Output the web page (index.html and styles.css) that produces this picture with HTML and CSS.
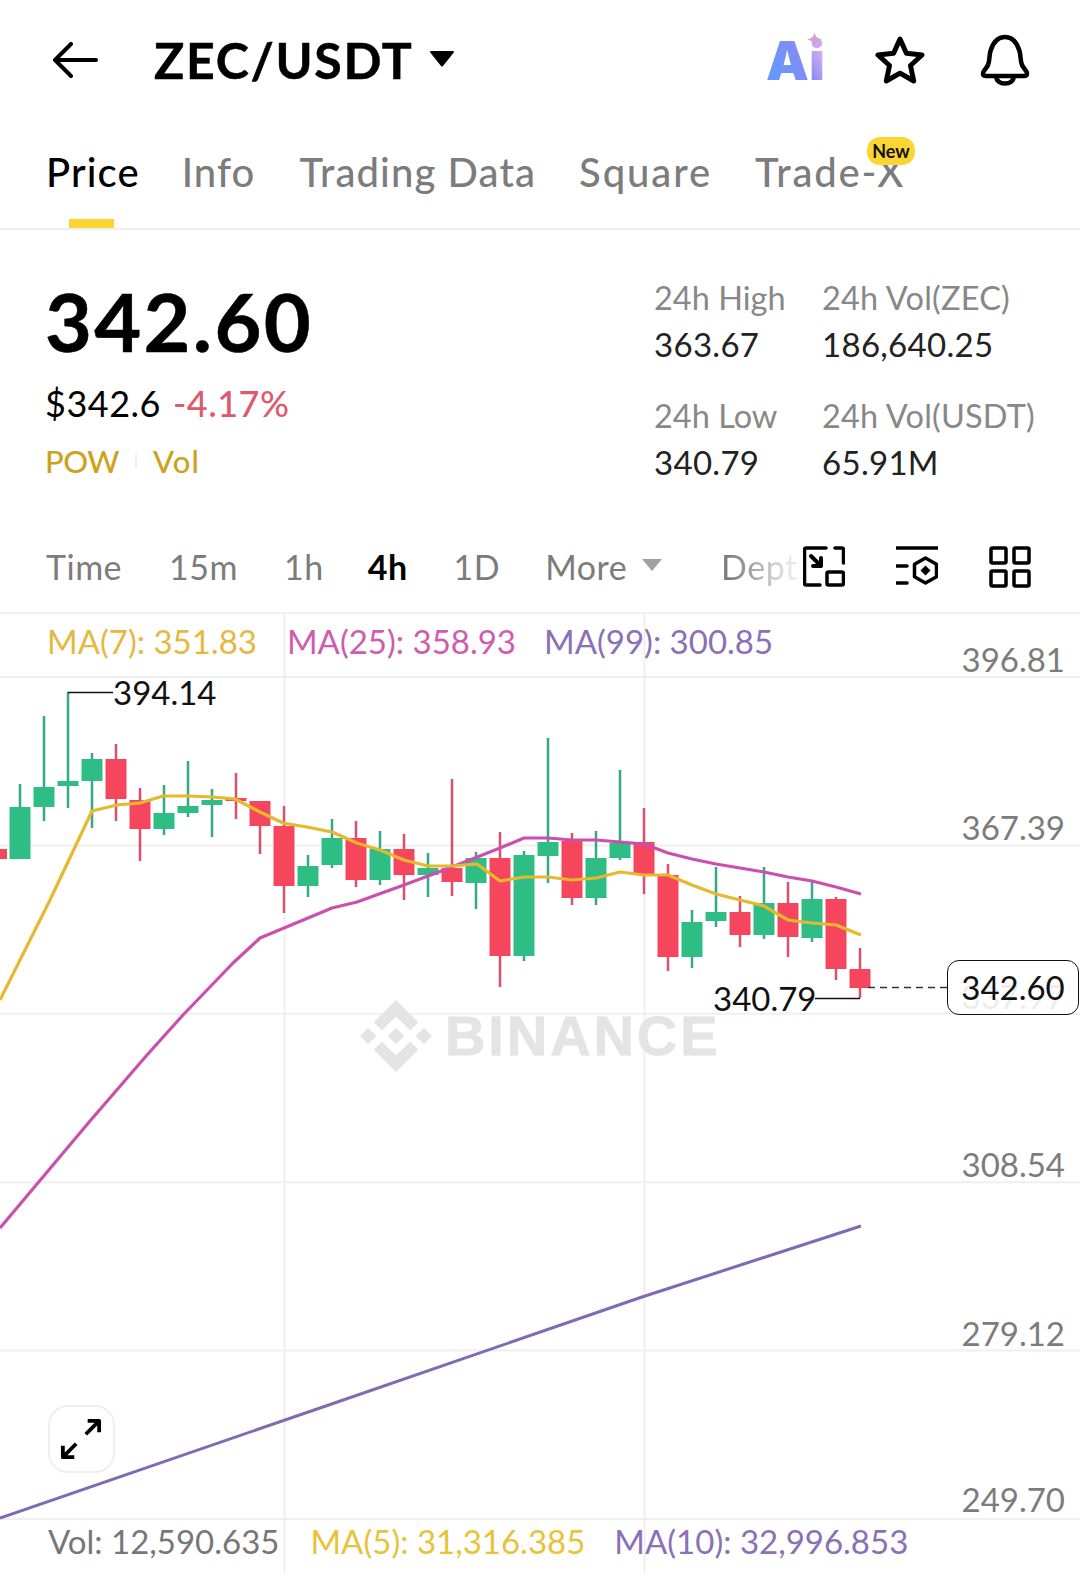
FILE: index.html
```html
<!DOCTYPE html>
<html lang="en">
<head>
<meta charset="utf-8">
<title>ZEC/USDT</title>
<link rel="stylesheet" href="styles.css">
</head>
<body>
<main class="page">
  <header class="topbar">
    <svg class="ic-back" viewBox="0 0 46 36"><path d="M44 18H3M19 2 3 18l16 16"/></svg>
    <h1 class="pair">ZEC/USDT</h1>
    <svg class="ic-caret" viewBox="0 0 26 18"><path d="M2 1h22a1 1 0 0 1 .8 1.6L14 16a1.3 1.3 0 0 1-2 0L1.200 2.600A1 1 0 0 1 2 1z"/></svg>
    <div class="top-actions">
      <span class="ai"><span class="ai-text">Ai</span><svg class="ai-spark" viewBox="0 0 16 16"><path d="M8 0c.6 4.400 2.800 6.800 8 8-5.200 1.200-7.400 3.600-8 8-.6-4.400-2.800-6.800-8-8 5.200-1.200 7.400-3.600 8-8z"/></svg></span>
      <svg class="ic-star" viewBox="0 0 50 48"><path d="M25 3l6.400 14.200 15.600 1.800-11.500 10.500 3.200 15.500-13.700-7.800-13.700 7.800 3.200-15.500L3 19l15.600-1.800z"/></svg>
      <svg class="ic-bell" viewBox="0 0 50 52"><path d="M3 39.500c0-3 3-4 5-8.500 2-5 1-9 2.500-14C13 8.500 18 3 25 3s12 5.500 14.500 14c1.500 5 .5 9 2.500 14 2 4.500 5 5.500 5 8.500 0 1.500-1 2.500-3 2.500H6c-2 0-3-1-3-2.500z"/><path d="M16 42.500c.5 4.500 4 7 9 7s8.500-2.500 9-7"/></svg>
    </div>
  </header>

  <nav class="tabs">
    <span class="tab tab-active">Price</span>
    <span class="tab">Info</span>
    <span class="tab">Trading Data</span>
    <span class="tab tab-square">Square</span>
    <span class="tab tab-new">Trade-X<span class="badge">New</span></span>
  </nav>

  <section class="summary">
    <div class="quote">
      <div class="last">342.60</div>
      <div class="fiat"><span>$342.6</span><span class="change">-4.17%</span></div>
      <div class="tags"><span class="tag-pow">POW</span><i class="tag-sep"></i><span class="tag-vol">Vol</span></div>
    </div>
    <dl class="stats">
      <div class="stat stat-a"><dt>24h High</dt><dd>363.67</dd></div>
      <div class="stat stat-b"><dt>24h Vol(ZEC)</dt><dd>186,640.25</dd></div>
      <div class="stat stat-a"><dt>24h Low</dt><dd>340.79</dd></div>
      <div class="stat stat-b"><dt>24h Vol(USDT)</dt><dd>65.91M</dd></div>
    </dl>
  </section>

  <div class="intervals">
    <span class="iv iv-time">Time</span>
    <span class="iv iv-15">15m</span>
    <span class="iv iv-1h">1h</span>
    <span class="iv iv-on">4h</span>
    <span class="iv iv-1d">1D</span>
    <span class="iv iv-more">More<svg class="ic-more" viewBox="0 0 22 14"><path d="M1 1h20L11 13z"/></svg></span>
    <span class="iv iv-depth">Dept</span>
    <div class="iv-icons">
      <svg class="ic-tool" viewBox="0 0 42 42"><path d="M23 2H3a1.500 1.500 0 0 0-1.500 1.500v34A1.500 1.500 0 0 0 3 39h14M40.500 17V3.500A1.500 1.500 0 0 0 39 2H32"/><rect x="24" y="26" width="16.500" height="13" rx="1.500"/><path class="thick" d="M8 10l10 10M18 12v8h-8"/></svg>
      <svg class="ic-tool" viewBox="0 0 42 42"><path d="M0 2h42M0 20h11M0 37h11"/><path d="M29.500 12l11 6.200v12.600l-11 6.200-11-6.200V18.200z"/><path class="solid" d="M29.500 19.500l5 5-5 5-5-5z"/></svg>
      <svg class="ic-tool" viewBox="0 0 42 42"><rect x="2" y="2" width="15" height="15" rx="1.500"/><rect x="25" y="2" width="15" height="15" rx="1.500"/><rect x="2" y="25" width="15" height="15" rx="1.500"/><rect x="25" y="25" width="15" height="15" rx="1.500"/></svg>
    </div>
  </div>

  <section class="chart">
    <svg class="plot" viewBox="0 612 1080 961">
      <g class="grid">
        <path d="M0 677H1080M0 845.400H1080M0 1013.800H1080M0 1182.200H1080M0 1350.600H1080M0 1519H1080M284.500 612V1573M644.500 612V1573"/>
      </g>

      <g class="watermark">
        <g transform="translate(360 1000) scale(.574)">
          <path d="M38.171 53.203 62.759 28.616l24.6 24.6 14.307-14.307L62.759 0 23.864 38.896z"/>
          <path d="M0 62.759 14.307 48.452 28.614 62.759 14.307 77.066z"/>
          <path d="M38.171 72.315 62.759 96.902l24.6-24.6 14.314 14.300-.007.007-38.907 38.907L23.857 86.610l-.02-.02z"/>
          <path d="M96.902 62.763l14.307-14.307 14.307 14.307-14.307 14.307z"/>
          <path d="M77.271 62.755 62.759 48.237 48.235 62.761 62.759 77.286z"/>
        </g>
        <text class="wm-text" x="445" y="1055">BINANCE</text>
      </g>

      <path class="wick-up" d="M20 784V859M44 716V821M68 692V808M92 753V828M164 785V835M188 761V817M212 789V837M308 855V897M332 819V868M380 831V885M428 853V897M476 852V909M524 851V961M548 738V883M596 831V905M620 770V860M692 910V968M716 867V927M764 867V939M812 880V942"/>
      <path class="wick-down" d="M116 744V821M140 788V861M236 773V819M260 801V854M284 806V913M356 821V887M404 834V900M452 779V896M500 832V987M572 833V905M644 808V894M668 864V971M740 896V947M788 882V957M836 897V980M860 948V998"/>

      <g class="body-down">
        <rect x="-14" y="849" width="21" height="10"/>
        <rect x="105.500" y="759" width="21" height="40"/>
        <rect x="129.500" y="800" width="21" height="29"/>
        <rect x="225.500" y="798" width="21" height="3"/>
        <rect x="249.500" y="801" width="21" height="25"/>
        <rect x="273.500" y="826" width="21" height="60"/>
        <rect x="345.500" y="838" width="21" height="42"/>
        <rect x="393.500" y="849" width="21" height="26"/>
        <rect x="441.500" y="868" width="21" height="14"/>
        <rect x="489.500" y="858" width="21" height="98"/>
        <rect x="561.500" y="841" width="21" height="57"/>
        <rect x="633.500" y="842" width="21" height="32"/>
        <rect x="657.500" y="875" width="21" height="82"/>
        <rect x="729.500" y="912" width="21" height="23"/>
        <rect x="777.500" y="903" width="21" height="34"/>
        <rect x="825.500" y="899" width="21" height="70"/>
        <rect x="849.500" y="969" width="21" height="19"/>
      </g>
      <g class="body-up">
        <rect x="9.500" y="807" width="21" height="52"/>
        <rect x="33.500" y="787" width="21" height="20"/>
        <rect x="57.500" y="781" width="21" height="5"/>
        <rect x="81.500" y="759" width="21" height="22"/>
        <rect x="153.500" y="813" width="21" height="16"/>
        <rect x="177.500" y="806" width="21" height="7"/>
        <rect x="201.500" y="800" width="21" height="5"/>
        <rect x="297.500" y="866" width="21" height="20"/>
        <rect x="321.500" y="838" width="21" height="27"/>
        <rect x="369.500" y="849" width="21" height="31"/>
        <rect x="417.500" y="868" width="21" height="7"/>
        <rect x="465.500" y="858" width="21" height="25"/>
        <rect x="513.500" y="855" width="21" height="101"/>
        <rect x="537.500" y="842" width="21" height="14"/>
        <rect x="585.500" y="858" width="21" height="40"/>
        <rect x="609.500" y="843" width="21" height="15"/>
        <rect x="681.500" y="922" width="21" height="35"/>
        <rect x="705.500" y="912" width="21" height="9"/>
        <rect x="753.500" y="903" width="21" height="32"/>
        <rect x="801.500" y="899" width="21" height="39"/>
      </g>

      <polyline class="ma99" points="0,1518 320,1408 642,1297 861,1226"/>
      <polyline class="ma25" points="0,1228 37,1184 90,1121 147,1055 183,1015 233,963 260,938 284,928 332,908 357,902 404,885 452,867 500,848 524,838 548,838 572,840 596,840 620,842 644,844 668,853 692,859 716,864 740,868 764,872 788,877 812,881 836,887 861,894"/>
      <polyline class="ma7" points="0,1000 50,900 92,811 117,805 140,803 163,796 187,796 213,797 235,799 260,812 283,823 307,827 332,832 357,843 380,850 404,860 428,866 452,866 477,864 500,881 524,877 548,877 572,880 596,878 620,872 644,875 668,875 692,885 716,894 740,900 764,906 788,920 812,923 836,925 861,935"/>

      <path class="leader" d="M68 692.500H113M815 998.500H860"/>
      <path class="last-line" d="M868 987.500H947"/>
    </svg>

    <div class="ma-row">
      <span class="ma-a">MA(7): 351.83</span>
      <span class="ma-b">MA(25): 358.93</span>
      <span class="ma-c">MA(99): 300.85</span>
    </div>

    <div class="axis">
      <span class="tick">396.81</span>
      <span class="tick">367.39</span>
      <span class="tick">337.97</span>
      <span class="tick">308.54</span>
      <span class="tick">279.12</span>
      <span class="tick tick-last">249.70</span>
    </div>

    <span class="extreme extreme-high">394.14</span>
    <span class="extreme extreme-low">340.79</span>
    <span class="price-box">342.60</span>

    <button class="expand" type="button" aria-label="Expand">
      <svg viewBox="0 0 44 44"><path d="M27 17 41 3M29 3h12v12M17 27 3 41M15 41H3V29"/></svg>
    </button>

    <div class="vol-row">
      <span class="vol-a">Vol: 12,590.635</span>
      <span class="vol-b">MA(5): 31,316.385</span>
      <span class="vol-c">MA(10): 32,996.853</span>
    </div>
  </section>
</main>
</body>
</html>
```

FILE: styles.css
```css
* { box-sizing: border-box; }
html, body { margin: 0; padding: 0; background: #fff; }
body { font-family: "Lato", "Liberation Sans", sans-serif; color: #000; }
.page { width: 1080px; height: 1573px; overflow: hidden; }

/* top bar */
.topbar { height: 120px; display: flex; align-items: center; padding-left: 52px; }
.ic-back { width: 46px; height: 36px; fill: none; stroke: #000; stroke-width: 4; stroke-linecap: round; stroke-linejoin: round; }
.pair { margin: 0 0 0 56px; font-size: 50px; line-height: 1; font-weight: 700; letter-spacing: 1.700px; -webkit-text-stroke: .5px #000; }
.ic-caret { width: 26px; height: 18px; margin: -2px 0 0 15px; fill: #000; }
.top-actions { margin-left: auto; display: flex; align-items: center; padding-right: 50px; }
.ai { position: relative; width: 58px; height: 56px; margin-right: 50px; }
.ai-text { position: absolute; left: -1px; top: -3px; font-family: "Inter", sans-serif; font-weight: 900; font-size: 54px; line-height: 64px; background: linear-gradient(60deg, #5f9bff 10%, #7f8df5 55%, #cfa8f2 80%); -webkit-background-clip: text; background-clip: text; color: transparent; }
.ai-spark { position: absolute; left: 40px; top: 0; width: 15px; height: 15px; fill: #cfa3d8; }
.ic-star { width: 50px; height: 48px; fill: none; stroke: #000; stroke-width: 5; stroke-linejoin: round; }
.ic-bell { width: 50px; height: 52px; margin-left: 55px; fill: none; stroke: #000; stroke-width: 4.500; stroke-linejoin: round; }

/* tabs */
.tabs { height: 110px; display: flex; padding: 28px 0 0 46px; border-bottom: 2px solid #eeeeee; gap: 44px; }
.tab { position: relative; font-size: 40px; line-height: 48px; font-weight: 500; letter-spacing: 1.100px; color: #7c7c7c; }
.tab-active { color: #000; margin-right: -2px; }
.tab-active::after { content: ""; position: absolute; left: 23px; top: 71px; width: 45px; height: 9px; background: #fcd535; }
.tab-square { letter-spacing: 1.900px; margin-left: -1px; }
.tab-new { margin-left: -1px; letter-spacing: 1.800px; }
.badge { position: absolute; left: 112px; top: -11px; width: 48px; height: 28px; border-radius: 13px; background: #fcd535; color: #111; font-size: 18px; font-weight: 700; letter-spacing: 0; line-height: 28px; text-align: center; }

/* summary */
.summary { height: 301px; display: flex; justify-content: space-between; padding: 0 0 0 45px; }
.last { margin-top: 46px; font-size: 81px; line-height: 90px; font-weight: 700; letter-spacing: 2.300px; -webkit-text-stroke: .5px #000; }
.fiat { margin-top: 15px; display: flex; gap: 12px; font-size: 36px; line-height: 44px; letter-spacing: .5px; }
.change { color: #dd5a70; font-weight: 500; }
.tags { margin-top: 14px; display: flex; align-items: center; font-size: 31px; line-height: 44px; color: #cda31e; font-weight: 500; }
.tag-pow { letter-spacing: -.5px; }
.tag-sep { width: 2px; height: 14px; margin: 0 16px; background: #eeeeee; }
.tag-vol { letter-spacing: 1px; }
.stats { margin: 46px 1px 0 0; width: 425px; display: flex; flex-wrap: wrap; align-content: flex-start; }
.stat { height: 118px; }
.stat-a { width: 168px; }
.stat-b { width: 257px; }
.stat dt { font-size: 32.500px; line-height: 44px; color: #888888; }
.stat-b dt { letter-spacing: .2px; }
.stat dd { margin: 2px 0 0; font-size: 33px; line-height: 44px; letter-spacing: .3px; color: #222222; }

/* intervals */
.intervals { height: 81px; display: flex; align-items: center; padding: 0 49px 10px 46px; font-size: 34px; letter-spacing: .5px; color: #7c7c7c; }
.iv { white-space: nowrap; }
.iv-15 { margin-left: 47px; }
.iv-1h { margin-left: 46px; }
.iv-on { margin-left: 44px; color: #000; font-weight: 700; }
.iv-1d { margin-left: 46px; }
.iv-more { margin-left: 45px; display: flex; align-items: center; }
.ic-more { width: 22px; height: 14px; margin: -4px 0 0 14px; fill: #a0a0a0; }
.iv-depth { margin-left: 58px; background: linear-gradient(90deg, #7c7c7c 10%, #e8e8e8 90%); -webkit-background-clip: text; background-clip: text; color: transparent; }
.iv-icons { margin-left: auto; display: flex; gap: 51px; }
.ic-tool { width: 42px; height: 42px; fill: none; stroke: #000; stroke-width: 3.500; stroke-linejoin: round; stroke-linecap: round; }
.ic-tool .thick { stroke-width: 4; }
.ic-tool .solid { fill: #000; stroke: none; }

/* chart */
.chart { position: relative; height: 961px; border-top: 2px solid #f0f0f0; }
.plot { position: absolute; left: 0; top: -2px; width: 1080px; height: 961px; display: block; }
.grid path { fill: none; stroke: #efefef; stroke-width: 2; }
.watermark path { fill: #e4e4e4; }
.wm-text { font-family: "Liberation Sans", sans-serif; font-weight: 700; font-size: 56px; letter-spacing: 2.900px; fill: #e4e4e4; stroke: #e4e4e4; stroke-width: .8px; }
.wick-up { fill: none; stroke: #35a981; stroke-width: 2.500; }
.wick-down { fill: none; stroke: #dc4f69; stroke-width: 2.500; }
.body-up rect { fill: #2ebd85; }
.body-down rect { fill: #f6465d; }
.ma7, .ma25, .ma99 { fill: none; stroke-linejoin: round; }
.ma7 { stroke: #e6b82c; stroke-width: 3.200; }
.ma25 { stroke: #cb4fae; stroke-width: 3.200; }
.ma99 { stroke: #7f6ab3; stroke-width: 3; }
.leader { fill: none; stroke: #111; stroke-width: 1.500; }
.last-line { fill: none; stroke: #333; stroke-width: 1.500; stroke-dasharray: 7 5; }

.ma-row, .vol-row { position: relative; display: flex; font-size: 33px; line-height: 40px; white-space: nowrap; }
.ma-row { height: 63px; padding: 7px 0 0 47px; gap: 30px; }
.ma-a { color: #e5b93f; }
.ma-b { color: #cf5cae; }
.ma-c { margin-left: -2px; color: #8a70b5; }

.axis { position: absolute; right: 15px; top: 25px; display: flex; flex-direction: column; align-items: flex-end; }
.tick { height: 168.400px; font-size: 33px; line-height: 40px; color: #7c7c7c; }
.tick-last { margin-top: -2px; }

.extreme { position: absolute; font-size: 33px; line-height: 40px; color: #111; }
.extreme-high { left: 113px; top: 58px; }
.extreme-low { left: 713px; top: 364px; }
.price-box { position: absolute; left: 947px; top: 346px; width: 132px; height: 55px; border: 1.500px solid #111; border-radius: 12px; background: rgba(255,255,255,.86); font-size: 33px; line-height: 52px; text-align: center; color: #111; }

.expand { position: absolute; left: 47.500px; top: 791px; width: 67px; height: 68px; padding: 0; border: 2px solid #efefef; border-radius: 20px; background: #fff; display: flex; align-items: center; justify-content: center; }
.expand svg { width: 42px; height: 42px; fill: none; stroke: #000; stroke-width: 4; stroke-linejoin: round; }

.vol-row { position: absolute; left: 48px; top: 907px; gap: 31px; }
.vol-a { color: #777777; }
.vol-b { color: #e8c338; }
.vol-c { margin-left: -2px; color: #8a70b5; }
```
